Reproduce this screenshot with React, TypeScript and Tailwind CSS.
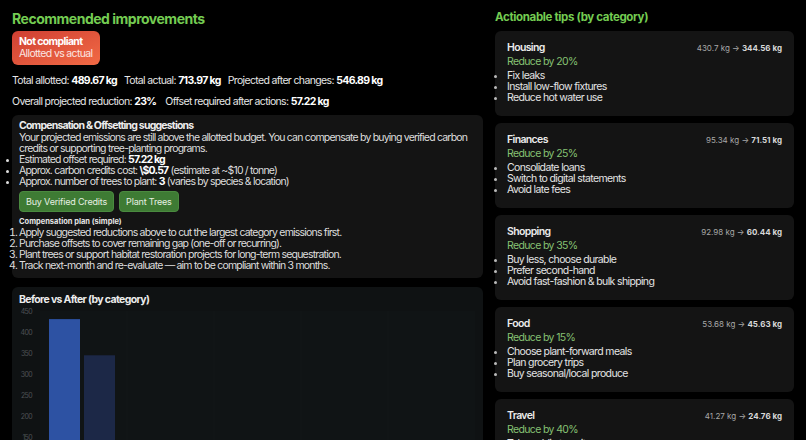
import React from "react";

type Tip = {
  name: string;
  before: string;
  after: string;
  pct: number;
  items: string[];
};

const tips: Tip[] = [
  { name: "Housing", before: "430.7", after: "344.56", pct: 20, items: ["Fix leaks", "Install low-flow fixtures", "Reduce hot water use"] },
  { name: "Finances", before: "95.34", after: "71.51", pct: 25, items: ["Consolidate loans", "Switch to digital statements", "Avoid late fees"] },
  { name: "Shopping", before: "92.98", after: "60.44", pct: 35, items: ["Buy less, choose durable", "Prefer second-hand", "Avoid fast-fashion & bulk shipping"] },
  { name: "Food", before: "53.68", after: "45.63", pct: 15, items: ["Choose plant-forward meals", "Plan grocery trips", "Buy seasonal/local produce"] },
  { name: "Travel", before: "41.27", after: "24.76", pct: 40, items: ["Take public transit", "Combine trips", "Fly less"] },
];

const chartData = [
  { before: 430.7, after: 344.56 },
  { before: 95.34, after: 71.51 },
  { before: 92.98, after: 60.44 },
  { before: 53.68, after: 45.63 },
  { before: 41.27, after: 24.76 },
];

function TipCard({ tip }: { tip: Tip }) {
  return (
    <div className="h-[85px] shrink-0 rounded-md bg-[#141414] pl-3 pr-3 pt-[10px]">
      <div className="flex items-center justify-between">
        <p className="text-[10.5px] font-semibold leading-[14px] text-[#ececec]">{tip.name}</p>
        <p className="text-[8px] tracking-normal text-[#a8a8a8]">
          {tip.before} kg → <span className="font-bold text-[#d8d8d8]">{tip.after} kg</span>
        </p>
      </div>
      <p className="text-[10.5px] leading-[13px] text-[#86c273]">Reduce by {tip.pct}%</p>
      <ul className="mt-[2px] list-disc text-[10.5px] leading-[11px] text-[#e4e4e4] marker:text-[#bbb]">
        {tip.items.map((it) => (
          <li key={it}>{it}</li>
        ))}
      </ul>
    </div>
  );
}

function Chart() {
  const ticks = [450, 400, 350, 300, 250, 200, 150, 100, 50, 0];
  const top = 5; // px offset of the 450 line inside the svg
  const perUnit = 21 / 50;
  const y = (v: number) => top + (450 - v) * perUnit;
  return (
    <svg width="471" height="240" className="block">
      <rect x="28" y={top} width="435" height={y(0) - top} fill="#101415" />
      {[1, 2, 3, 4].map((i) => (
        <line key={i} x1={28 + i * 87} x2={28 + i * 87} y1={top} y2={y(0)} stroke="#121618" strokeWidth="1" />
      ))}
      {ticks.map((t) => (
        <text key={t} x="20" y={y(t) + 2.5} textAnchor="end" fontSize="7" fill="#4d5154" fontFamily="Inter, sans-serif">
          {t}
        </text>
      ))}
      {chartData.map((d, i) => (
        <g key={i}>
          <rect x={37 + i * 87} y={y(d.before)} width="31" height={y(0) - y(d.before)} fill="#2d52a3" />
          <rect x={72 + i * 87} y={y(d.after)} width="31" height={y(0) - y(d.after)} fill="#1c2847" />
        </g>
      ))}
    </svg>
  );
}

export default function App() {
  return (
    <div className="flex h-[440px] gap-3 overflow-hidden bg-black px-3 pt-[9px] font-['Inter',sans-serif] tracking-[-0.04em] text-white">
      <div className="flex w-[471px] shrink-0 flex-col">
        <h1 className="text-[14px] font-bold leading-[19px] tracking-[-0.035em] text-[#74cc52]">Recommended improvements</h1>
        <div className="mt-[3px] self-start whitespace-nowrap rounded-md bg-gradient-to-br from-[#cf3f33] to-[#f26a45] px-[7px] py-[5px] leading-[12px]">
          <p className="text-[10.5px] font-bold text-white">Not compliant</p>
          <p className="text-[10.5px] text-[#fbe7e2]">Allotted vs actual</p>
        </div>
        <p className="mt-[9px] text-[10.5px] leading-[13px] text-[#e6e6e6]">
          Total allotted: <b className="text-white">489.67 kg</b>
          <span className="ml-[7px]">Total actual: </span>
          <b className="text-white">713.97 kg</b>
          <span className="ml-[7px]">Projected after changes: </span>
          <b className="text-white">546.89 kg</b>
        </p>
        <p className="mt-[8px] text-[10.5px] leading-[13px] text-[#e6e6e6]">
          Overall projected reduction: <b className="text-white">23%</b>
          <span className="ml-[9px]">Offset required after actions: </span>
          <b className="text-white">57.22 kg</b>
        </p>
        <div className="mt-[7px] h-[163px] shrink-0 rounded-md bg-[#141414] pl-[7px] pr-[4px] pt-[4px] tracking-[-0.05em]">
          <p className="text-[10.5px] font-bold leading-[13px] text-[#ececec]">Compensation &amp; Offsetting suggestions</p>
          <p className="text-[10.5px] leading-[11px] text-[#dedede]">
            Your projected emissions are still above the allotted budget. You can compensate by buying verified carbon credits or supporting tree-planting programs.
          </p>
          <ul className="list-disc text-[10.5px] leading-[11px] text-[#dedede]">
            <li>Estimated offset required: <b className="text-white">57.22 kg</b></li>
            <li>Approx. carbon credits cost: <b className="text-white">\$0.57</b> (estimate at ~$10 / tonne)</li>
            <li>Approx. number of trees to plant: <b className="text-white">3</b> (varies by species &amp; location)</li>
          </ul>
          <div className="mt-[4px] flex gap-[5px]">
            <button className="h-[21px] rounded-[4px] border border-[#4a8a3f] bg-[#3e7b34] px-[6px] text-[9px] tracking-[-0.02em] text-[#e6f0e2]">Buy Verified Credits</button>
            <button className="h-[21px] rounded-[4px] border border-[#4a8a3f] bg-[#3e7b34] px-[6px] text-[9px] tracking-[-0.02em] text-[#e6f0e2]">Plant Trees</button>
          </div>
          <p className="mt-[5px] text-[7.5px] font-bold leading-[10px] tracking-normal text-[#e6e6e6]">Compensation plan (simple)</p>
          <ol className="list-decimal text-[10.5px] leading-[11px] text-[#dedede]">
            <li>Apply suggested reductions above to cut the largest category emissions first.</li>
            <li>Purchase offsets to cover remaining gap (one-off or recurring).</li>
            <li>Plant trees or support habitat restoration projects for long-term sequestration.</li>
            <li>Track next-month and re-evaluate — aim to be compliant within 3 months.</li>
          </ol>
        </div>
        <div className="mt-[9px] flex-1 rounded-md bg-[#0f1213] pt-[6px]">
          <p className="pl-[7px] text-[10.5px] font-bold leading-[13px] text-[#ececec]">Before vs After (by category)</p>
          <Chart />
        </div>
      </div>
      <div className="flex w-[299px] shrink-0 flex-col">
        <h2 className="text-[11.5px] font-bold leading-[16px] tracking-[-0.03em] text-[#74cc52]">Actionable tips (by category)</h2>
        <div className="mt-[6px] flex flex-col gap-[7px]">
          {tips.map((t) => (
            <TipCard key={t.name} tip={t} />
          ))}
        </div>
      </div>
    </div>
  );
}
